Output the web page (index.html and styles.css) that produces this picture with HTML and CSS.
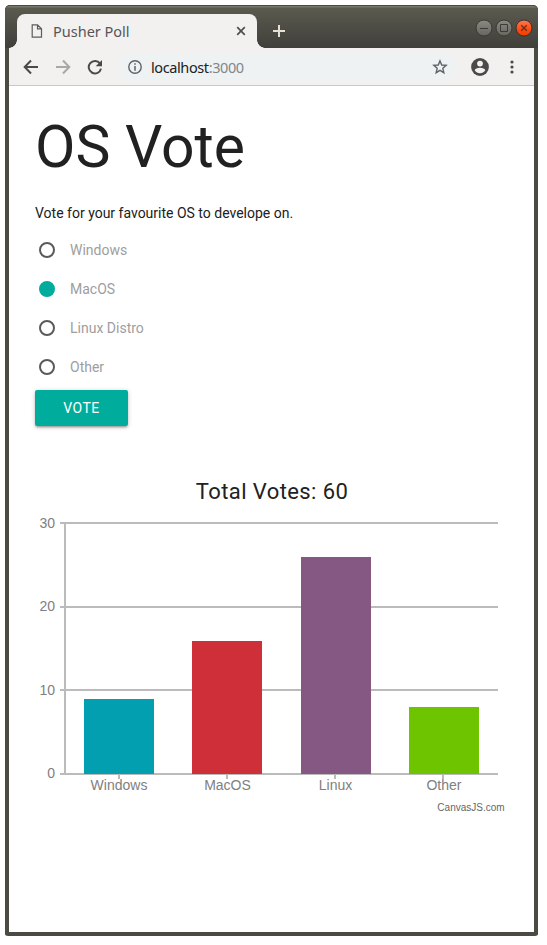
FILE: index.html
```html
<!DOCTYPE html>
<html lang="en">
<head>
<meta charset="utf-8">
<title>Pusher Poll</title>
<link rel="stylesheet" href="styles.css">
</head>
<body>
<div class="window">
  <header class="titlebar">
    <div class="tab">
      <svg class="tab-file" width="12" height="14" viewBox="0 0 12 14" fill="none" stroke="#5c5c5c" stroke-width="1.2"><path d="M1.2.8h5.3l4 4v8.4H1.2zM6.5.8v4h4"/></svg>
      <span class="tab-title">Pusher Poll</span>
      <svg class="tab-close" width="10" height="10" viewBox="0 0 10 10" stroke="#4f4f4f" stroke-width="1.7"><path d="M1.2 1.2l7.6 7.6M8.8 1.2L1.2 8.8"/></svg>
    </div>
    <svg class="new-tab" width="12" height="12" viewBox="0 0 12 12" stroke="#e5e1d3" stroke-width="2"><path d="M6 0v12M0 6h12"/></svg>
    <div class="controls">
      <svg class="control" viewBox="0 0 18 18"><circle cx="9" cy="9" r="8" fill="url(#grey)" stroke="#3a3933"/><path d="M5 9.5h8" stroke="#3c3b37"/></svg>
      <svg class="control" viewBox="0 0 18 18"><circle cx="9" cy="9" r="8" fill="url(#grey)" stroke="#3a3933"/><path d="M5.5 5.5h7v7h-7z" fill="none" stroke="#3c3b37"/></svg>
      <svg class="control" viewBox="0 0 18 18"><circle cx="9" cy="9" r="8" fill="url(#orange)" stroke="#3f3029"/><path d="M6.2 6.2l5.6 5.6M11.8 6.2l-5.6 5.6" stroke="#6b2c18" stroke-width="1.3"/></svg>
    </div>
    <svg class="defs" width="0" height="0">
      <linearGradient id="grey" x2="0" y2="1"><stop stop-color="#8b8a82"/><stop offset="1" stop-color="#66655e"/></linearGradient>
      <linearGradient id="orange" x2="0" y2="1"><stop stop-color="#ff7a55"/><stop offset=".6" stop-color="#fa4a10"/><stop offset="1" stop-color="#ee4000"/></linearGradient>
    </svg>
  </header>
  <nav class="toolbar">
    <svg class="nav-icon back" viewBox="0 0 16 16" fill="none" stroke="#4a4a4a" stroke-width="2"><path d="M15 8H2M8 1.5L1.7 8 8 14.5"/></svg>
    <svg class="nav-icon forward" viewBox="0 0 16 16" fill="none" stroke="#a8a8a8" stroke-width="2"><path d="M1 8h13M8 1.5L14.3 8 8 14.5"/></svg>
    <svg class="nav-icon reload" viewBox="0 0 16 16"><path d="M13 4.6A6.200 6.200 0 1 0 14 9.600" fill="none" stroke="#4a4a4a" stroke-width="2"/><path d="M15 1v6.300H8.700z" fill="#4a4a4a"/></svg>
    <div class="address">
      <svg width="14" height="14" viewBox="0 0 14 14"><circle cx="7" cy="7" r="6.200" fill="none" stroke="#5f6368" stroke-width="1.400"/><path d="M7 3.200v1.500M7 6v4.800" stroke="#5f6368" stroke-width="1.500"/></svg>
      <span class="url">localhost<span class="port">:3000</span></span>
      <svg class="star" width="16" height="16" viewBox="0 0 16 16"><path d="M8 1.900l1.750 4.100 4.450.4-3.370 2.920 1 4.350L8 11.350l-3.830 2.320 1-4.350L1.800 6.400l4.450-.4z" fill="none" stroke="#5f6368" stroke-width="1.400"/></svg>
    </div>
    <svg class="profile" width="18" height="18" viewBox="0 0 18 18"><circle cx="9" cy="9" r="8.900" fill="#4a4a4a"/><circle cx="9" cy="5.600" r="2.900" fill="#f2f1f0"/><path d="M3.700 12.300c.4-3.500 10.200-3.500 10.600 0-2.300 4-8.300 4-10.600 0z" fill="#f2f1f0"/></svg>
    <svg class="menu" width="4" height="14" viewBox="0 0 4 14" fill="#4a4a4a"><circle cx="2" cy="2" r="1.600"/><circle cx="2" cy="7" r="1.600"/><circle cx="2" cy="12" r="1.600"/></svg>
  </nav>
  <main class="page">
    <h1>OS Vote</h1>
    <p class="intro">Vote for your favourite OS to develope on.</p>
    <div class="options">
      <div class="option"><span class="radio"></span>Windows</div>
      <div class="option"><span class="radio checked"></span>MacOS</div>
      <div class="option"><span class="radio"></span>Linux Distro</div>
      <div class="option"><span class="radio"></span>Other</div>
    </div>
    <button class="vote">VOTE</button>
    <svg class="chart" width="473" height="350" viewBox="35 470 473 350">
      <text class="chart-title" x="272" y="499" text-anchor="middle">Total Votes: 60</text>
      <path d="M60 523h438M60 607h438M60 690h438M60 774h438M65 522v253M119 774v5M227 774v5M335 774v5M443 774v5" stroke="#bbb" stroke-width="2"/>
      <g shape-rendering="crispEdges">
        <rect x="84" y="699" width="70" height="75" fill="#019fb0"/>
        <rect x="192" y="641" width="70" height="133" fill="#ce2f39"/>
        <rect x="301" y="557" width="70" height="217" fill="#855783"/>
        <rect x="409" y="707" width="70" height="67" fill="#6fc400"/>
      </g>
      <g class="axis" text-anchor="end">
        <text x="55" y="528">30</text><text x="55" y="611">20</text><text x="55" y="695">10</text><text x="55" y="778">0</text>
      </g>
      <g class="axis" text-anchor="middle">
        <text x="119" y="790">Windows</text><text x="227.500" y="790">MacOS</text><text x="335.500" y="790">Linux</text><text x="444" y="790">Other</text>
      </g>
      <text class="credit" x="504.600" y="811" text-anchor="end">CanvasJS.com</text>
    </svg>
  </main>
</div>
</body>
</html>
```
FILE: styles.css
```css
* { box-sizing: border-box; }
body { margin: 0; padding: 5px 9px 9px 5px; background: #fff; font-family: Roboto, sans-serif; }
.window { width: 533px; height: 931px; border: solid #4b4b43; border-width: 0 4px 4px; border-radius: 5px 5px 3px 3px; background: #fff; }
.titlebar { display: flex; height: 43px; margin: 0 -4px; padding: 9px 5px 0 12px; border-top: 1px solid #4b4b43; border-radius: 5px 5px 0 0; background: linear-gradient(#77766b 1px, #5b5a4f 2px, #403f3a); }
.tab { position: relative; display: flex; align-items: center; width: 240px; height: 34px; margin-top: -1px; padding: 0 11px 0 14px; border-radius: 8px 8px 0 0; background: #f2f1f0; }
.tab::before, .tab::after { content: ""; position: absolute; bottom: 0; width: 8px; height: 8px; }
.tab::before { left: -8px; background: radial-gradient(circle at 0 0, transparent 7.5px, #f2f1f0 8px); }
.tab::after { right: -8px; background: radial-gradient(circle at 100% 0, transparent 7.5px, #f2f1f0 8px); }
.tab-title { flex: 1; margin-left: 10px; font: 14.5px/20px "Noto Sans", sans-serif; letter-spacing: 0; color: #55555a; }
.new-tab { margin: 10px 0 0 16px; }
.controls { display: flex; gap: 2px; height: 18px; margin: 4px 0 0 auto; }
.control { width: 18px; height: 18px; }
.defs { position: absolute; }
.toolbar { display: flex; align-items: center; height: 38px; padding: 0 20px 0 14px; background: #f2f1f0; border-bottom: 1px solid #cac8c6; }
.nav-icon { width: 16px; height: 16px; }
.forward, .reload { margin-left: 16px; }
.address { display: flex; flex: 1; align-items: center; height: 28px; margin: 0 14px 0 14px; padding: 0 9px 0 11px; border-radius: 14px; background: #eef2f3; }
.url { flex: 1; margin-left: 9px; font: 14.5px/20px "Noto Sans", sans-serif; letter-spacing: -.4px; color: #202124; }
.port { color: #80868b; }
.menu { margin-left: 21px; }
.page { padding: 26px 26px 0; color: #212121; }
h1 { margin: 0; font-size: 58.8px; line-height: 70px; font-weight: 400; }
.intro { margin: 20px 0 0; font-size: 14px; line-height: 22px; }
.options { margin-top: 6px; }
.option { display: flex; align-items: center; height: 39px; padding-left: 4px; font-size: 14px; color: #9e9e9e; }
.radio { width: 16px; height: 16px; margin-right: 15px; border: 2px solid #5a5a5a; border-radius: 50%; }
.checked { border-color: #00ad9c; background: #00ad9c; }
.vote { display: block; height: 36px; width: 93px; margin-top: 4px; padding: 0; border: 0; border-radius: 2px; background: #00ad9c; color: #fff; font: 14px/36px Roboto, sans-serif; letter-spacing: .5px; box-shadow: 0 2px 2px rgba(0,0,0,.14), 0 3px 1px -2px rgba(0,0,0,.12), 0 1px 5px rgba(0,0,0,.2); }
.chart { display: block; margin-top: 44px; }
.chart-title { font: 22px Roboto, sans-serif; letter-spacing: .4px; fill: #212121; }
.axis { font: 14px "Liberation Sans", sans-serif; fill: #808080; }
.credit { font: 10px "Liberation Sans", sans-serif; fill: #666; }
```
